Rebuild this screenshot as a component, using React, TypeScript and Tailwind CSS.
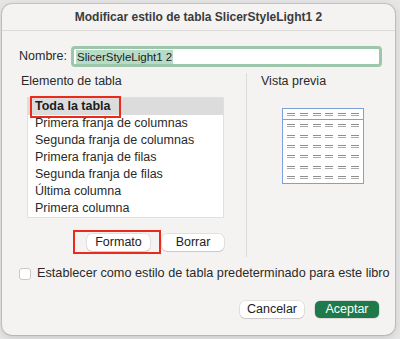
import React from 'react';

const items = [
    'Toda la tabla',
    'Primera franja de columnas',
    'Segunda franja de columnas',
    'Primera franja de filas',
    'Segunda franja de filas',
    'Última columna',
    'Primera columna',
];

const btn = 'h-[17px] rounded-[5px] bg-white shadow-[0_0_0_0.5px_rgba(0,0,0,0.15),0_1px_1px_rgba(0,0,0,0.1)] text-[12.5px] leading-[17px] text-[#222]';

function PreviewTable() {
    const rows = Array.from({ length: 7 });
    const cols = Array.from({ length: 6 });
    return (
        <div className="w-[82px] h-[76px] border-[1.5px] border-[#7f9fdc] bg-white flex flex-col">
            {rows.map((_, r) => (
                <div
                    key={r}
                    className={`flex-1 flex items-center justify-around px-[2px] ${r === 0 ? 'border-b-[1.5px] border-[#7f9fdc]' : ''}`}
                >
                    {cols.map((_, c) => (
                        <div key={c} className="w-[8px] h-[3px] flex flex-col justify-between">
                            <div className="h-[1px] bg-[#8e8e8e]" />
                            <div className="h-[1px] bg-[#aaaaaa]" />
                        </div>
                    ))}
                </div>
            ))}
        </div>
    );
}

export default function App() {
    return (
        <div
            className="w-[400px] h-[339px] bg-[#e6e6e6] overflow-hidden pl-[2px] pt-[4px] text-[#222]"
            style={{ fontFamily: '"Liberation Sans", Arial, sans-serif' }}
        >
            <div className="w-[393px] h-[331px] rounded-[10px] bg-[#f4f3f1] shadow-[0_0_0_1px_rgba(0,0,0,0.12),0_2px_8px_rgba(0,0,0,0.15)] flex flex-col">
                {/* Title bar */}
                <div className="h-[27px] border-b border-[#dcdbd9] flex items-center justify-center text-[12px] font-bold text-[#3b3b3b]">
                    Modificar estilo de tabla SlicerStyleLight1 2
                </div>

                {/* Nombre */}
                <div className="flex items-center mt-[15px] pl-[17px] pr-[13px]">
                    <span className="text-[12.5px] text-[#2a2a2a] w-[52px]">Nombre:</span>
                    <div className="flex-1 h-[21px] rounded-[4px] border-[3px] border-[#9cc7aa] bg-white flex items-center pl-[2px]">
                        <span className="text-[11.5px] leading-[14px] bg-[#b7dbc6] text-[#1c1c1c] px-[1px]">SlicerStyleLight1 2</span>
                    </div>
                </div>

                {/* Columns */}
                <div className="flex mt-[6px] h-[184px]">
                    <div className="w-[245px] border-r border-[#dcdbd9] flex flex-col">
                        <div className="text-[12.5px] text-[#2a2a2a] pl-[19px] leading-[16px]">Elemento de tabla</div>
                        <div className="relative ml-[25px] mt-[8px] w-[197px] bg-white border border-[#e0e0e0]">
                            {items.map((it, i) => (
                                <div
                                    key={it}
                                    className={`h-[17px] flex items-center pl-[7px] text-[12.5px] ${i === 0 ? 'bg-[#dcdcdc] font-bold text-[#1c1c1c]' : 'text-[#2a2a2a]'}`}
                                >
                                    {it}
                                </div>
                            ))}
                            <div className="absolute left-[2px] top-[-2px] w-[91px] h-[22px] border-[2.5px] border-[#ec2a1c]" />
                        </div>
                        <div className="relative flex gap-[12px] ml-[85px] mt-[16px]">
                            <button className={`w-[63px] ${btn}`}>Formato</button>
                            <button className={`w-[62px] ${btn}`}>Borrar</button>
                            <div className="absolute left-[-14px] top-[-4px] w-[88px] h-[24px] border-[2.5px] border-[#ec2a1c]" />
                        </div>
                    </div>
                    <div className="flex-1 flex flex-col">
                        <div className="text-[12.5px] text-[#2a2a2a] pl-[14px] leading-[16px]">Vista previa</div>
                        <div className="ml-[35px] mt-[19px]">
                            <PreviewTable />
                        </div>
                    </div>
                </div>

                {/* Checkbox */}
                <div className="flex items-center gap-[6px] pl-[17px] mt-[7px]">
                    <div className="w-[12px] h-[12px] rounded-[3px] bg-white border border-[#c9c9c9]" />
                    <span className="text-[12.7px] text-[#2a2a2a] whitespace-nowrap">Establecer como estilo de tabla predeterminado para este libro</span>
                </div>

                {/* Footer buttons */}
                <div className="flex justify-end gap-[11px] pr-[16px] mt-[18px]">
                    <button className={`w-[64px] ${btn}`}>Cancelar</button>
                    <button className="w-[64px] h-[17px] rounded-[5px] bg-[#1f7a4b] shadow-[0_0_0_0.5px_rgba(0,0,0,0.2)] text-[12.5px] leading-[17px] text-white">
                        Aceptar
                    </button>
                </div>
            </div>
        </div>
    );
}
